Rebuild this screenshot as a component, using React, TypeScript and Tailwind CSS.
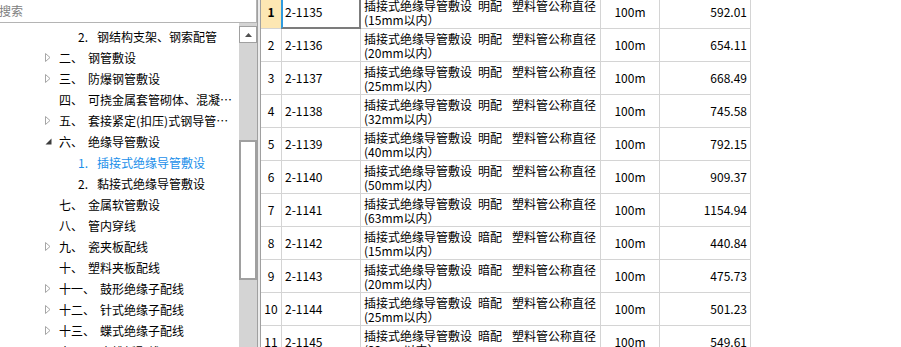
import React from 'react';

type TreeItem = {
  level: 1 | 2;
  num: string;
  text: string;
  arrow?: 'closed' | 'open';
  active?: boolean;
};

const tree: TreeItem[] = [
  { level: 2, num: '2.', text: '钢结构支架、钢索配管' },
  { level: 1, arrow: 'closed', num: '二、', text: '钢管敷设' },
  { level: 1, arrow: 'closed', num: '三、', text: '防爆钢管敷设' },
  { level: 1, num: '四、', text: '可挠金属套管砌体、混凝土内暗配' },
  { level: 1, arrow: 'closed', num: '五、', text: '套接紧定(扣压)式钢导管敷设' },
  { level: 1, arrow: 'open', num: '六、', text: '绝缘导管敷设' },
  { level: 2, num: '1.', text: '插接式绝缘导管敷设', active: true },
  { level: 2, num: '2.', text: '黏接式绝缘导管敷设' },
  { level: 1, num: '七、', text: '金属软管敷设' },
  { level: 1, num: '八、', text: '管内穿线' },
  { level: 1, arrow: 'closed', num: '九、', text: '瓷夹板配线' },
  { level: 1, num: '十、', text: '塑料夹板配线' },
  { level: 1, arrow: 'closed', num: '十一、', text: '鼓形绝缘子配线' },
  { level: 1, arrow: 'closed', num: '十二、', text: '针式绝缘子配线' },
  { level: 1, arrow: 'closed', num: '十三、', text: '蝶式绝缘子配线' },
  { level: 1, arrow: 'closed', num: '十四、', text: '木槽板配线' },
];

const rows = [
  { code: '2-1135', kind: '明配', size: '15', price: '592.01' },
  { code: '2-1136', kind: '明配', size: '20', price: '654.11' },
  { code: '2-1137', kind: '明配', size: '25', price: '668.49' },
  { code: '2-1138', kind: '明配', size: '32', price: '745.58' },
  { code: '2-1139', kind: '明配', size: '40', price: '792.15' },
  { code: '2-1140', kind: '明配', size: '50', price: '909.37' },
  { code: '2-1141', kind: '明配', size: '63', price: '1154.94' },
  { code: '2-1142', kind: '暗配', size: '15', price: '440.84' },
  { code: '2-1143', kind: '暗配', size: '20', price: '475.73' },
  { code: '2-1144', kind: '暗配', size: '25', price: '501.23' },
  { code: '2-1145', kind: '暗配', size: '32', price: '549.61' },
];

function Arrow({ type }: { type?: 'closed' | 'open' }) {
  if (type === 'closed') {
    return (
      <svg width="6" height="9" viewBox="0 0 6 9" className="ml-[1px]">
        <path d="M0.5 0.5 L5 4.5 L0.5 8.5 Z" fill="#fff" stroke="#a6a6a6" />
      </svg>
    );
  }
  if (type === 'open') {
    return (
      <svg width="7" height="7" viewBox="0 0 7 7" className="ml-[1px]">
        <path d="M6.5 0.5 L6.5 6.5 L0.5 6.5 Z" fill="#3c3c3c" />
      </svg>
    );
  }
  return null;
}

function TreeRow({ item }: { item: TreeItem }) {
  const color = item.active ? 'text-[#1a8fea]' : 'text-black';
  if (item.level === 2) {
    return (
      <div className={`flex h-[21px] items-center whitespace-nowrap pl-[78px] ${color}`}>
        <span className="w-[19px] shrink-0">{item.num}</span>
        <span className="min-w-0 truncate">{item.text}</span>
      </div>
    );
  }
  return (
    <div className={`flex h-[21px] items-center whitespace-nowrap pl-[44px] ${color}`}>
      <span className="flex w-[15px] shrink-0 items-center">
        <Arrow type={item.arrow} />
      </span>
      <span className="shrink-0">{item.num}</span>
      <span className="ml-[5px] min-w-0 truncate">{item.text}</span>
    </div>
  );
}

function Scrollbar() {
  return (
    <div className="flex w-[18px] shrink-0 flex-col bg-[#d4d4d4]">
      <div className="mt-[3px] flex h-[17px] shrink-0 items-center justify-center border border-[#a0a0a0] bg-white">
        <svg width="7" height="4" viewBox="0 0 7 4">
          <path d="M0 4 L3.5 0 L7 4 Z" fill="#505050" />
        </svg>
      </div>
      <div className="mt-[97px] h-[140px] shrink-0 border-2 border-[#a0a0a0] bg-white" />
    </div>
  );
}

export default function App() {
  return (
    <div className="flex h-[347px] w-[901px] overflow-hidden bg-white font-['Noto_Sans_CJK_SC',sans-serif] text-[12px] text-black">
      <div className="flex w-[257px] shrink-0 flex-col">
        <div className="flex h-[23px] shrink-0 items-center border-b border-r border-[#b4b4b4] text-[#808080]">
          <span className="-ml-[1px]">搜索</span>
        </div>
        <div className="flex min-h-0 flex-1">
          <div className="w-[239px] overflow-hidden pt-[3px]">
            {tree.map((item, i) => (
              <TreeRow key={i} item={item} />
            ))}
          </div>
          <Scrollbar />
        </div>
      </div>

      <div className="w-[4px] shrink-0 border-x border-[#a0a0a0] bg-[#ececec]" />

      <div className="min-w-0 flex-1 overflow-hidden">
        <div className="-mt-[4px] w-[490px]">
          {rows.map((row, i) => (
            <div key={row.code} className="flex h-[33px] border-b border-[#d4d4d4]">
              <div
                className={`flex w-[21px] shrink-0 items-center justify-center border-r border-[#d4d4d4] ${
                  i === 0 ? 'bg-[#fde7b3] font-bold' : ''
                }`}
              >
                {i + 1}
              </div>
              <div className="relative flex w-[79px] shrink-0 items-center border-r border-[#d4d4d4] pl-[3px]">
                {row.code}
                {i === 0 && (
                  <div className="absolute -bottom-px -left-px -right-px top-0 border-2 border-[#7c7c7c] border-l-[#2f9be0]" />
                )}
              </div>
              <div className="w-[240px] shrink-0 overflow-hidden border-r border-[#d4d4d4] pl-[3px] pt-[3px] leading-[14px]">
                <div className="whitespace-nowrap">
                  <span>插接式绝缘导管敷设</span>
                  <span className="ml-[6px]">{row.kind}</span>
                  <span className="ml-[10px]">塑料管公称直径</span>
                </div>
                <div className="whitespace-nowrap">({row.size}mm以内）</div>
              </div>
              <div className="flex w-[59px] shrink-0 items-center justify-center border-r border-[#d4d4d4]">
                100m
              </div>
              <div className="flex w-[91px] shrink-0 items-center justify-end border-r border-[#d4d4d4] pr-[3px]">
                {row.price}
              </div>
            </div>
          ))}
        </div>
      </div>
    </div>
  );
}
